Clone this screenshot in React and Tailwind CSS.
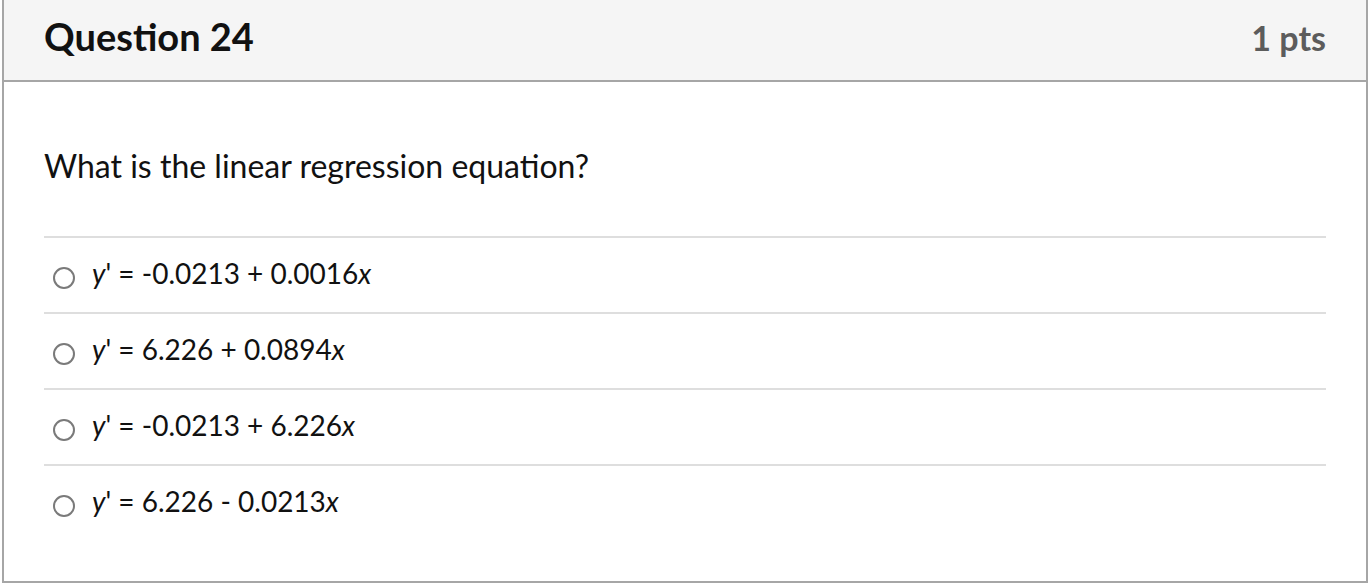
import React from "react";

const options = [
  ["-0.0213 + 0.0016", "x"],
  ["6.226 + 0.0894", "x"],
  ["-0.0213 + 6.226", "x"],
  ["6.226 - 0.0213", "x"],
];

export default function App() {
  return (
    <div
      className="w-[1371px] h-[584px] bg-white pl-[2px] pr-[3px]"
      style={{ fontFamily: "Lato, 'Noto Sans', sans-serif" }}
    >
      <div className="h-[583px] border-2 border-t-0 border-[#a6a6a6] flex flex-col">
        <div className="h-[82px] shrink-0 bg-[#f5f5f5] border-b-2 border-[#a6a6a6] flex items-baseline justify-between pl-[40px] pr-[40px] pt-[13px]">
          <h2 className="text-[38px] leading-[46px] font-bold text-[#111111]">Question 24</h2>
          <div className="text-[34px] leading-[41px] font-bold text-[#5c5c5c]">1 pts</div>
        </div>
        <div className="px-[40px] pt-[65px]">
          <p className="text-[32px] leading-[38px] text-[#111111] mb-[51px]">
            What is the linear regression equation?
          </p>
          {options.map(([t, v], i) => (
            <div
              key={i}
              className="h-[76px] border-t-2 border-[#dedede] flex items-center"
            >
              <span className="ml-[9px] mt-[6px] w-[22px] h-[22px] rounded-full border-2 border-[#7a7a7a] shrink-0" />
              <span className="ml-[17px] pb-[4px] text-[28px] leading-[34px] text-[#111111]">
                <i>y</i>' = {t}
                <i>{v}</i>
              </span>
            </div>
          ))}
        </div>
      </div>
    </div>
  );
}
